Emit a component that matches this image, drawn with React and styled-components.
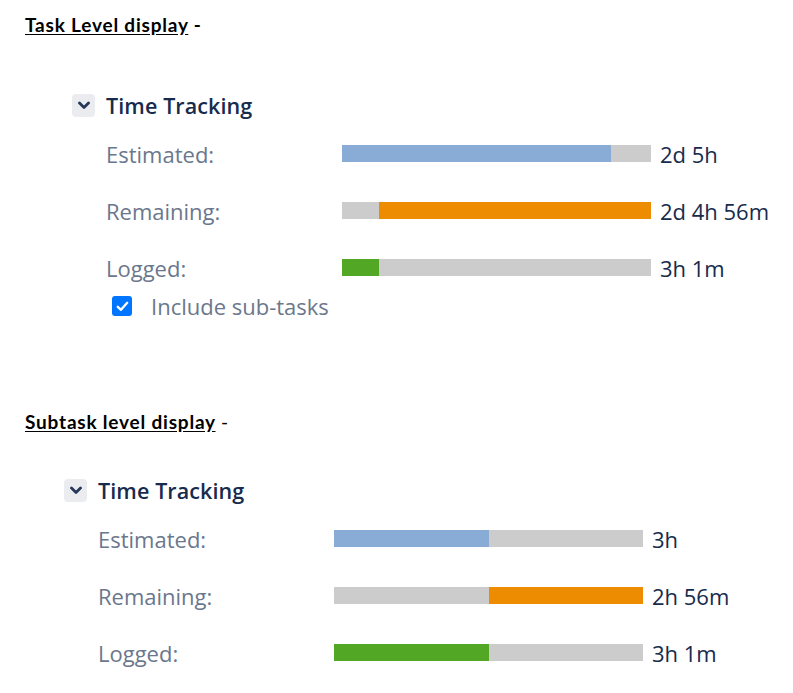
import React from "react";
import styled, { createGlobalStyle } from "styled-components";

const Global = createGlobalStyle`
  html, body { margin: 0; padding: 0; background: #ffffff; }
  body { font-family: "Open Sans", "Noto Sans", sans-serif; }
`;

const Page = styled.div`
  width: 793px;
  height: 693px;
  display: flex;
  flex-direction: column;
  padding: 14px 0 0 25px;
  box-sizing: border-box;
`;

const Heading = styled.div`
  font-family: Lato, "Liberation Sans", sans-serif;
  font-size: 19px;
  font-weight: 700;
  color: #000;
  line-height: 22px;
  letter-spacing: 0.8px;
  margin-top: ${(p) => p.$top || 0}px;
  span.u { text-decoration: underline; text-underline-offset: 2px; }
  span.d { font-weight: ${(p) => (p.$lightDash ? 400 : 700)}; }
`;

const Panel = styled.div`
  display: flex;
  flex-direction: column;
  margin-left: ${(p) => p.$indent}px;
  margin-top: ${(p) => p.$top}px;
`;

const TitleRow = styled.div`
  display: flex;
  align-items: center;
  gap: 11px;
  height: 24px;
`;

const Chevron = styled.div`
  width: 23px;
  height: 23px;
  border-radius: 4px;
  background: #ebecf0;
  display: flex;
  align-items: center;
  justify-content: center;
  color: #253858;
`;

const Title = styled.div`
  font-size: 21.5px;
  font-weight: 600;
  color: #172b4d;
  letter-spacing: 0.1px;
`;

const Rows = styled.div`
  display: flex;
  flex-direction: column;
  margin-left: 34px;
  margin-top: ${(p) => p.$top}px;
`;

const Row = styled.div`
  display: grid;
  grid-template-columns: 227px 309px auto;
  column-gap: 9px;
  align-items: center;
  height: 57px;
`;

const Label = styled.div`
  font-size: 22px;
  color: #6b778c;
`;

const Bar = styled.div`
  height: 17px;
  background: #cccccc;
  display: flex;
  justify-content: ${(p) => (p.$right ? "flex-end" : "flex-start")};
`;

const Fill = styled.div`
  height: 100%;
  background: ${(p) => p.$color};
`;

const Value = styled.div`
  font-size: 22px;
  color: #172b4d;
`;

const CheckRow = styled.label`
  display: flex;
  align-items: center;
  gap: 19px;
  margin-left: 6px;
  margin-top: -5px;
  font-size: 22px;
  color: #6b778c;
`;

const Box = styled.span`
  width: 20px;
  height: 20px;
  border-radius: 3px;
  background: #0075ff;
  display: flex;
  align-items: center;
  justify-content: center;
`;

const ChevronIcon = () => (
  <svg width="12" height="9" viewBox="0 0 12 9">
    <path d="M1.5 2 L6 6.5 L10.5 2" fill="none" stroke="currentColor" strokeWidth="2.8" strokeLinecap="round" strokeLinejoin="round" />
  </svg>
);

const CheckIcon = () => (
  <svg width="13" height="11" viewBox="0 0 13 11">
    <path d="M1.8 5.8 L5 8.8 L11.2 1.8" fill="none" stroke="#fff" strokeWidth="2.4" strokeLinecap="round" strokeLinejoin="round" />
  </svg>
);

const COLORS = { blue: "#89acd6", orange: "#ed8c00", green: "#52a825" };

const TrackRow = ({ label, value, pct, color, right }) => (
  <Row>
    <Label>{label}</Label>
    <Bar $right={right}>
      <Fill $color={COLORS[color]} style={{ width: `${pct}%` }} />
    </Bar>
    <Value>{value}</Value>
  </Row>
);

const TimeTracking = ({ indent, top, rows, children }) => (
  <Panel $indent={indent} $top={top}>
    <TitleRow>
      <Chevron>
        <ChevronIcon />
      </Chevron>
      <Title>Time Tracking</Title>
    </TitleRow>
    <Rows $top={8}>
      {rows.map((r) => (
        <TrackRow key={r.label} {...r} />
      ))}
      {children}
    </Rows>
  </Panel>
);

export default function App() {
  return (
    <>
      <Global />
      <Page>
        <Heading>
          <span className="u">Task Level display</span> <span className="d">-</span>
        </Heading>
        <TimeTracking
          indent={47}
          top={57}
          rows={[
            { label: "Estimated:", value: "2d 5h", pct: 87, color: "blue" },
            { label: "Remaining:", value: "2d 4h 56m", pct: 88, color: "orange", right: true },
            { label: "Logged:", value: "3h 1m", pct: 12, color: "green" },
          ]}
        >
          <CheckRow>
            <Box>
              <CheckIcon />
            </Box>
            Include sub-tasks
          </CheckRow>
        </TimeTracking>
        <Heading $top={90} $lightDash>
          <span className="u">Subtask level display</span> <span className="d">-</span>
        </Heading>
        <TimeTracking
          indent={39}
          top={45}
          rows={[
            { label: "Estimated:", value: "3h", pct: 50, color: "blue" },
            { label: "Remaining:", value: "2h 56m", pct: 50, color: "orange", right: true },
            { label: "Logged:", value: "3h 1m", pct: 50, color: "green" },
          ]}
        />
      </Page>
    </>
  );
}
